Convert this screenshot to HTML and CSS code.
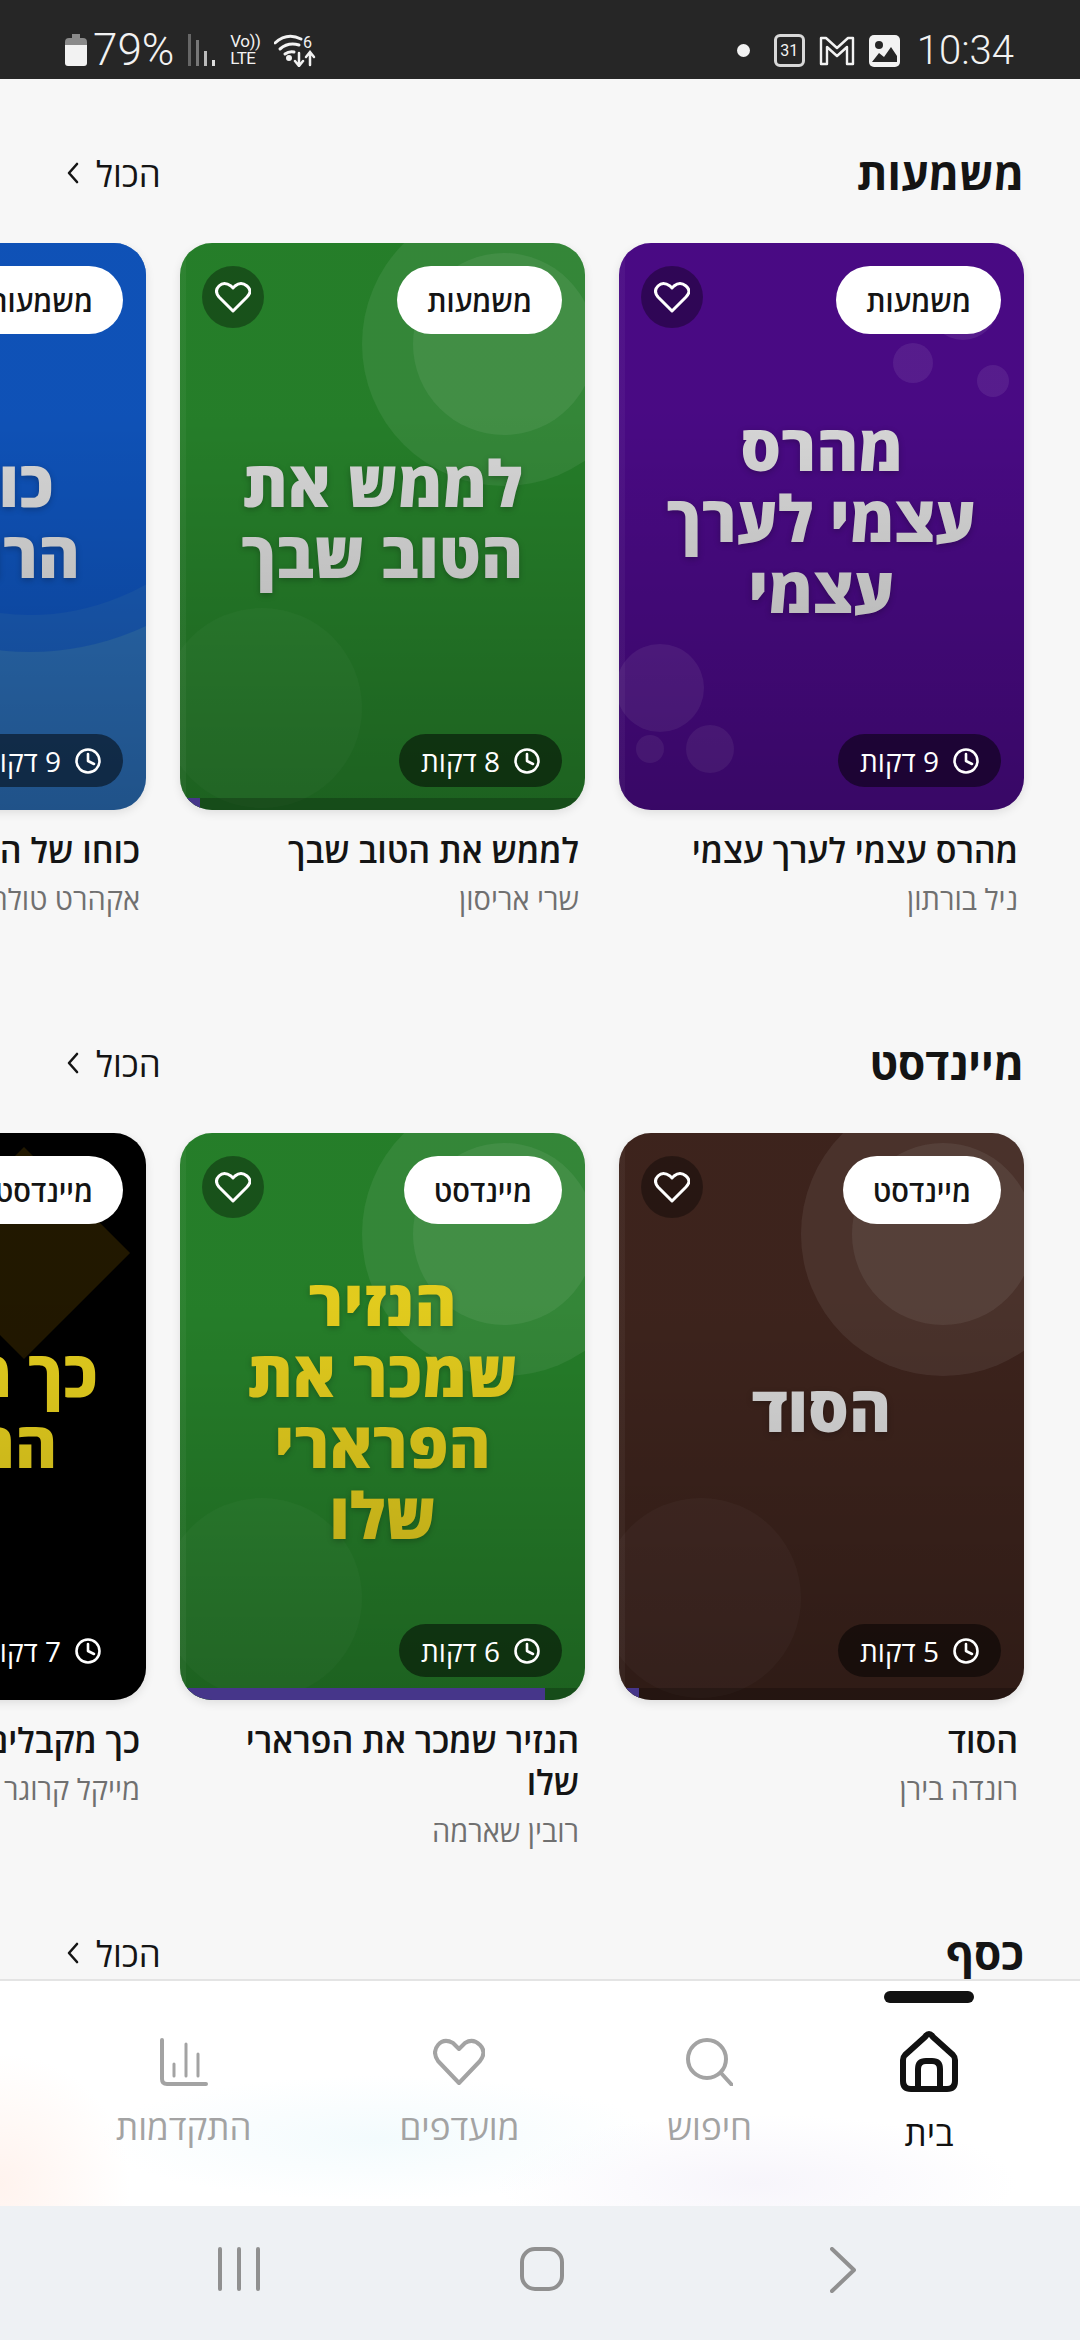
FILE: index.html
```html
<!DOCTYPE html>
<html lang="he" dir="rtl">
<head>
    <meta charset="UTF-8">
    <meta name="viewport" content="width=device-width, initial-scale=1.0">
    <title>ספרים</title>
    <link rel="stylesheet" href="styles.css">
</head>
<body>
<div class="phone">
    <header class="status-bar" dir="ltr">
        <div class="status-group">
            <svg class="battery" width="22" height="32" viewBox="0 0 22 32"><path d="M7 0h8v4h3q4 0 4 4v3H0V8q0-4 4-4h3z" fill="#8a8a8a"/><path d="M0 11h22v18q0 3-3 3H3q-3 0-3-3z" fill="#f2f2f2"/></svg>
            <span class="status-text battery-text">79%</span>
            <svg class="signal" width="28" height="32" viewBox="0 0 28 32"><rect x="0" y="0" width="3" height="32" fill="#666"/><rect x="8" y="6" width="3" height="26" fill="#777"/><rect x="16" y="17" width="3" height="15" fill="#bbb"/><rect x="24" y="26" width="3" height="6" fill="#ddd"/></svg>
            <span class="volte"><span>Vo))</span><span>LTE</span></span>
            <svg class="wifi" width="42" height="34" viewBox="0 0 42 34" fill="none" stroke="#f2f2f2" stroke-width="3" stroke-linecap="round"><path d="M1 10Q13-1 27 6"/><path d="M6 16Q14 9 25 12"/><path d="M11 21Q15 18 20 19"/><circle cx="15" cy="25" r="1.5" fill="#f2f2f2"/><path d="M25 20v12M21 28l4 5 4-5" stroke-width="2.5"/><path d="M36 32V20M32 24l4-5 4 5" stroke-width="2.5"/><text x="29" y="15" font-size="16" fill="#f2f2f2" stroke="none" font-family="Roboto">6</text></svg>
        </div>
        <div class="status-group">
            <span class="status-dot"></span>
            <span class="cal-icon">31</span>
            <svg width="36" height="30" viewBox="0 0 36 30" fill="none" stroke="#f2f2f2" stroke-width="2.4" stroke-linejoin="round"><path d="M2 2h5l11 10L29 2h5v26h-6V11l-10 9-10-9v17H2z"/></svg>
            <svg width="31" height="32" viewBox="0 0 31 32"><rect width="31" height="32" rx="5" fill="#f2f2f2"/><circle cx="10" cy="10" r="4" fill="#262626"/><path d="M3 27l7-9 5 4 7-10 6 9v6z" fill="#262626"/></svg>
            <span class="status-text time">10:34</span>
        </div>
    </header>

    <main class="content">
        <section class="section">
            <div class="section-head">
                <h2>משמעות</h2>
                <a class="see-all">הכול
                    <svg width="12" height="24" viewBox="0 0 12 24" fill="none" stroke="#141414" stroke-width="2.6" stroke-linecap="round" stroke-linejoin="round"><path d="M10 3L2 12l8 9"/></svg>
                </a>
            </div>
            <div class="row">
                <article class="book">
                    <div class="cover cover-purple">
                        <i class="dot" style="left:309px;top:27px;width:70px;height:70px"></i>
                        <i class="dot" style="left:274px;top:100px;width:40px;height:40px"></i>
                        <i class="dot" style="left:358px;top:122px;width:32px;height:32px"></i>
                        <i class="dot" style="left:-3px;top:401px;width:88px;height:88px"></i>
                        <i class="dot" style="left:17px;top:492px;width:28px;height:28px"></i>
                        <i class="dot" style="left:67px;top:482px;width:48px;height:48px"></i>
                        <div class="cover-text">מהרס<br>עצמי לערך<br>עצמי</div>
                        <div class="shade"></div>
                        <span class="tag">משמעות</span>
                        <span class="fav"><svg width="36" height="32" viewBox="0 0 36 32"><path class="heart" d="M18 30L4 16Q-1 10 4 5T16 5L18 7 20 5Q26 0 32 5T32 16z"/></svg></span>
                        <span class="duration"><svg width="26" height="26" viewBox="0 0 26 26"><circle class="clock" cx="13" cy="13" r="11.5"/><path class="clock" d="M13 6v7l6 3"/></svg>9 דקות</span>
                    </div>
                    <h3>מהרס עצמי לערך עצמי</h3>
                    <p>ניל בורתון</p>
                </article>
                <article class="book">
                    <div class="cover cover-green">
                        <i class="ring ring-outer"></i>
                        <i class="ring ring-inner"></i>
                        <i class="ring ring-low"></i>
                        <div class="cover-text">לממש את<br>הטוב שבך</div>
                        <div class="shade"></div>
                        <div class="progress"><b style="width:20px"></b></div>
                        <span class="tag">משמעות</span>
                        <span class="fav"><svg width="36" height="32" viewBox="0 0 36 32"><path class="heart" d="M18 30L4 16Q-1 10 4 5T16 5L18 7 20 5Q26 0 32 5T32 16z"/></svg></span>
                        <span class="duration"><svg width="26" height="26" viewBox="0 0 26 26"><circle class="clock" cx="13" cy="13" r="11.5"/><path class="clock" d="M13 6v7l6 3"/></svg>8 דקות</span>
                    </div>
                    <h3>לממש את הטוב שבך</h3>
                    <p>שרי אריסון</p>
                </article>
                <article class="book">
                    <div class="cover cover-blue">
                        <i class="wave wave-outer"></i>
                        <i class="wave wave-inner"></i>
                        <div class="cover-text">כוחו של<br>הרגע הזה</div>
                        <div class="shade"></div>
                        <span class="tag">משמעות</span>
                        <span class="fav"><svg width="36" height="32" viewBox="0 0 36 32"><path class="heart" d="M18 30L4 16Q-1 10 4 5T16 5L18 7 20 5Q26 0 32 5T32 16z"/></svg></span>
                        <span class="duration"><svg width="26" height="26" viewBox="0 0 26 26"><circle class="clock" cx="13" cy="13" r="11.5"/><path class="clock" d="M13 6v7l6 3"/></svg>9 דקות</span>
                    </div>
                    <h3>כוחו של הרגע הזה</h3>
                    <p>אקהרט טולה</p>
                </article>
            </div>
        </section>

        <section class="section">
            <div class="section-head">
                <h2>מיינדסט</h2>
                <a class="see-all">הכול
                    <svg width="12" height="24" viewBox="0 0 12 24" fill="none" stroke="#141414" stroke-width="2.6" stroke-linecap="round" stroke-linejoin="round"><path d="M10 3L2 12l8 9"/></svg>
                </a>
            </div>
            <div class="row">
                <article class="book">
                    <div class="cover cover-brown">
                        <i class="ring ring-outer"></i>
                        <i class="ring ring-inner"></i>
                        <i class="ring ring-low"></i>
                        <div class="cover-text">הסוד</div>
                        <div class="shade"></div>
                        <div class="progress"><b style="width:20px"></b></div>
                        <span class="tag">מיינדסט</span>
                        <span class="fav"><svg width="36" height="32" viewBox="0 0 36 32"><path class="heart" d="M18 30L4 16Q-1 10 4 5T16 5L18 7 20 5Q26 0 32 5T32 16z"/></svg></span>
                        <span class="duration"><svg width="26" height="26" viewBox="0 0 26 26"><circle class="clock" cx="13" cy="13" r="11.5"/><path class="clock" d="M13 6v7l6 3"/></svg>5 דקות</span>
                    </div>
                    <h3>הסוד</h3>
                    <p>רונדה בירן</p>
                </article>
                <article class="book">
                    <div class="cover cover-green">
                        <i class="ring ring-outer"></i>
                        <i class="ring ring-inner"></i>
                        <i class="ring ring-low"></i>
                        <div class="cover-text cover-text-yellow">הנזיר<br>שמכר את<br>הפרארי<br>שלו</div>
                        <div class="shade"></div>
                        <div class="progress"><b style="width:365px"></b></div>
                        <span class="tag">מיינדסט</span>
                        <span class="fav"><svg width="36" height="32" viewBox="0 0 36 32"><path class="heart" d="M18 30L4 16Q-1 10 4 5T16 5L18 7 20 5Q26 0 32 5T32 16z"/></svg></span>
                        <span class="duration"><svg width="26" height="26" viewBox="0 0 26 26"><circle class="clock" cx="13" cy="13" r="11.5"/><path class="clock" d="M13 6v7l6 3"/></svg>6 דקות</span>
                    </div>
                    <h3>הנזיר שמכר את הפרארי שלו</h3>
                    <p>רובין שארמה</p>
                </article>
                <article class="book">
                    <div class="cover cover-black">
                        <i class="diamond"></i>
                        <div class="cover-text cover-text-yellow">כך מקבלים<br>החלטות</div>
                        <div class="shade"></div>
                        <span class="tag">מיינדסט</span>
                        <span class="fav"><svg width="36" height="32" viewBox="0 0 36 32"><path class="heart" d="M18 30L4 16Q-1 10 4 5T16 5L18 7 20 5Q26 0 32 5T32 16z"/></svg></span>
                        <span class="duration"><svg width="26" height="26" viewBox="0 0 26 26"><circle class="clock" cx="13" cy="13" r="11.5"/><path class="clock" d="M13 6v7l6 3"/></svg>7 דקות</span>
                    </div>
                    <h3>כך מקבלים החלטות</h3>
                    <p>מייקל קרוגר</p>
                </article>
            </div>
        </section>

        <section class="section">
            <div class="section-head">
                <h2>כסף</h2>
                <a class="see-all">הכול
                    <svg width="12" height="24" viewBox="0 0 12 24" fill="none" stroke="#141414" stroke-width="2.6" stroke-linecap="round" stroke-linejoin="round"><path d="M10 3L2 12l8 9"/></svg>
                </a>
            </div>
        </section>
    </main>

    <nav class="tabs">
        <a class="tab tab-active">
            <svg width="58" height="61" viewBox="0 0 58 61" fill="none" stroke="#111" stroke-width="6" stroke-linejoin="round"><path d="M29 3Q31 3 33 6L53 24Q55 26 55 29V50Q55 58 47 58H11Q3 58 3 50V29Q3 26 5 24L25 6Q27 3 29 3Z"/><path d="M18 58V38Q18 30 26 30H32Q40 30 40 38V58"/></svg>
            <span>בית</span>
        </a>
        <a class="tab">
            <svg width="47" height="48" viewBox="0 0 47 48" fill="none" stroke="#a3a3a3" stroke-width="4" stroke-linecap="round"><circle cx="21" cy="21" r="19"/><path d="M35 35L46 47"/></svg>
            <span>חיפוש</span>
        </a>
        <a class="tab">
            <svg width="52" height="48" viewBox="0 0 52 48" fill="none" stroke="#a3a3a3" stroke-width="4" stroke-linejoin="round"><path d="M26 45L5 23Q-1 14 5 7T20 5L26 11 32 5Q40 0 47 7T47 23z"/></svg>
            <span>מועדפים</span>
        </a>
        <a class="tab">
            <svg width="48" height="48" viewBox="0 0 48 48" fill="none" stroke="#a3a3a3" stroke-linecap="round"><path d="M2 2V41Q2 46 7 46H46" stroke-width="4"/><path d="M14 38V26M26 38V6M38 38V16" stroke-width="3"/></svg>
            <span>התקדמות</span>
        </a>
    </nav>

    <footer class="system-nav" dir="ltr">
        <svg width="44" height="44" viewBox="0 0 44 44" stroke="#909090" stroke-width="4" stroke-linecap="round"><path d="M3 2V42M22 2V42M41 2V42"/></svg>
        <svg class="home-btn" width="44" height="44" viewBox="0 0 44 44" fill="none" stroke="#909090" stroke-width="4"><rect x="2" y="2" width="40" height="40" rx="13"/></svg>
        <svg width="26" height="46" viewBox="0 0 26 46" fill="none" stroke="#909090" stroke-width="4" stroke-linecap="round" stroke-linejoin="round"><path d="M2 2L24 23 2 44"/></svg>
    </footer>
</div>
</body>
</html>
```

FILE: styles.css
```css
* {
    box-sizing: border-box;
}
body {
    margin: 0;
    font-family: "Open Sans", "DejaVu Sans", sans-serif;
    background: #f7f7f7;
    color: #141414;
}
.phone {
    height: 2340px;
    display: flex;
    flex-direction: column;
    overflow: hidden;
}

/* status bar */
.status-bar {
    height: 79px;
    flex: none;
    background: #262626;
    color: #f2f2f2;
    display: flex;
    align-items: flex-end;
    justify-content: space-between;
    padding: 0 66px 12px 65px;
}
.status-group {
    display: flex;
    align-items: center;
    gap: 14px;
}
.status-text {
    font-family: Roboto, sans-serif;
    font-weight: 300;
    font-size: 40px;
    line-height: 32px;
}
.battery-text {
    margin-left: -8px;
    font-size: 44px;
}
.volte {
    display: flex;
    flex-direction: column;
    font-family: Roboto, sans-serif;
    font-size: 17px;
    line-height: 17px;
    letter-spacing: -0.5px;
}
.status-dot {
    width: 13px;
    height: 13px;
    border-radius: 50%;
    background: #f2f2f2;
    margin-right: 10px;
}
.cal-icon {
    width: 31px;
    height: 33px;
    border: 3px solid #d8d8d8;
    border-radius: 6px;
    font-family: Roboto, sans-serif;
    font-size: 16px;
    line-height: 27px;
    text-align: center;
}
.time {
    margin-left: 3px;
}

/* sections */
.content {
    flex: 1;
    min-height: 0;
    overflow: hidden;
}
.section {
    height: 890px;
    padding-top: 64px;
}
.section-head {
    height: 60px;
    padding: 0 56px 0 67px;
    display: flex;
    align-items: center;
    justify-content: space-between;
}
.section-head h2 {
    margin: 0;
    font-size: 44px;
    font-weight: 700;
}
.see-all {
    display: flex;
    align-items: center;
    gap: 17px;
    font-size: 35px;
}
.row {
    margin-top: 40px;
    padding-right: 56px;
    display: flex;
    gap: 34px;
    overflow: hidden;
    padding-bottom: 4px;
}

/* book cards */
.book {
    flex: none;
    width: 405px;
}
.book h3 {
    margin: 19px 0 0;
    padding: 0 6px 0 30px;
    font-size: 34px;
    line-height: 42px;
    font-weight: 600;
}
.book p {
    margin: 8px 0 0;
    padding: 0 6px;
    font-size: 29px;
    line-height: 40px;
    color: #707070;
}
.cover {
    position: relative;
    height: 567px;
    border-radius: 32px;
    overflow: hidden;
    display: flex;
    align-items: center;
    justify-content: center;
    padding-bottom: 18px;
    box-shadow: 0 3px 10px rgba(0,0,0,0.1);
}
.cover-purple { background: #4a0a86; }
.cover-green { background: #26802a; }
.cover-brown { background: #3e241d; }
.cover-blue { background: #2a6cb4; }
.cover-black { background: #000; }

.cover-text {
    position: relative;
    text-align: center;
    white-space: nowrap;
    font-size: 64px;
    line-height: 71px;
    font-weight: 800;
    color: #dadada;
    text-shadow: 0 2px 6px rgba(0,0,0,0.25);
}
.cover-text-yellow {
    color: #e6cf1e;
}
.shade {
    position: absolute;
    inset: 0;
    background:
        linear-gradient(to right, rgba(255,255,255,0.04) 6px, transparent 6px),
        linear-gradient(to bottom, rgba(0,0,0,0.02) 30%, rgba(0,0,0,0.24));
}

/* cover art */
.dot {
    position: absolute;
    border-radius: 50%;
    background: rgba(255,255,255,0.08);
}
.ring {
    position: absolute;
    border-radius: 50%;
    background: rgba(255,255,255,0.07);
}
.ring-outer { left: 182px; top: -41px; width: 284px; height: 284px; }
.ring-inner { left: 233px; top: 10px; width: 182px; height: 182px; }
.ring-low {
    left: -18px;
    top: 365px;
    width: 200px;
    height: 200px;
    background: rgba(255,255,255,0.03);
}
.wave {
    position: absolute;
    border-radius: 50%;
    background: rgba(0,70,190,0.4);
}
.wave-outer { left: 17px; top: -135px; width: 544px; height: 544px; }
.wave-inner { left: 54px; top: -98px; width: 470px; height: 470px; }
.diamond {
    position: absolute;
    left: 208px;
    top: 45px;
    width: 150px;
    height: 150px;
    background: #221800;
    transform: rotate(45deg);
}
.progress {
    position: absolute;
    left: 0;
    right: 0;
    bottom: 0;
    height: 12px;
    background: rgba(0,0,0,0.22);
}
.progress b {
    position: absolute;
    left: 0;
    top: 0;
    bottom: 0;
    background: #46368a;
}

/* things over the cover */
.tag {
    position: absolute;
    top: 23px;
    right: 23px;
    height: 68px;
    padding: 0 30px;
    border-radius: 34px;
    background: #fff;
    display: flex;
    align-items: center;
    font-size: 29px;
    font-weight: 600;
    color: #141414;
}
.fav {
    position: absolute;
    top: 23px;
    left: 22px;
    width: 62px;
    height: 62px;
    border-radius: 50%;
    background: rgba(0,0,0,0.35);
    display: flex;
    align-items: center;
    justify-content: center;
}
.heart {
    fill: none;
    stroke: #fff;
    stroke-width: 3;
    stroke-linejoin: round;
}
.duration {
    position: absolute;
    bottom: 23px;
    right: 23px;
    height: 53px;
    padding: 0 22px 0 22px;
    border-radius: 27px;
    background: rgba(0,0,0,0.5);
    display: flex;
    align-items: center;
    gap: 14px;
    font-size: 28px;
    color: #fff;
}
.clock {
    fill: none;
    stroke: #fff;
    stroke-width: 2.6;
    stroke-linecap: round;
    stroke-linejoin: round;
}

/* bottom tabs */
.tabs {
    position: relative;
    flex: none;
    height: 227px;
    border-top: 2px solid #e4e4e4;
    padding: 50px 122px 0 116px;
    display: flex;
    justify-content: space-between;
    align-items: flex-start;
    background:
        radial-gradient(circle at 0% 90%, #fff3ee, transparent 130px),
        radial-gradient(ellipse at 35% 70%, #f3fbfd, transparent 280px),
        radial-gradient(ellipse at 70% 90%, #f7f5fb, transparent 260px),
        #fff;
}
.tab {
    display: flex;
    flex-direction: column;
    align-items: center;
    gap: 19px;
    font-size: 35px;
    line-height: 44px;
    color: #a3a3a3;
    padding-top: 7px;
}
.tab-active {
    color: #111;
    padding-top: 0;
    gap: 19px;
}
.tab-active::before {
    content: "";
    position: absolute;
    top: 10px;
    width: 90px;
    height: 12px;
    border-radius: 6px;
    background: #111;
}

/* android buttons */
.system-nav {
    flex: none;
    height: 134px;
    background: #eef1f4;
    display: flex;
    align-items: flex-start;
    padding: 41px 224px 0 217px;
    justify-content: space-between;
}
.home-btn {
    margin-right: 8px;
}
```
